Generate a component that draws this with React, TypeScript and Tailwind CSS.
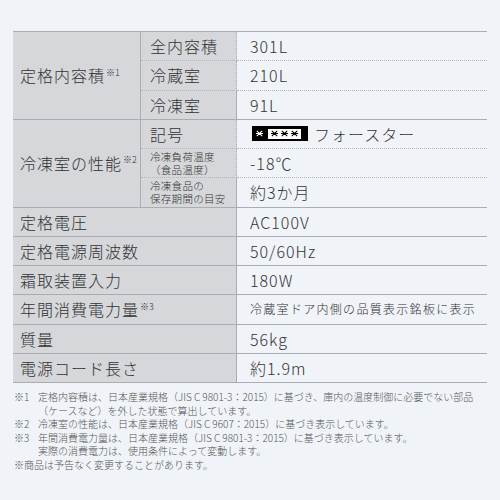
import type { ReactNode } from 'react';

const solid = 'border-[#a9acb0]';

function Star({ color }: { color: string }) {
  return (
    <svg width="9" height="9" viewBox="0 0 10 10" className="shrink-0">
      <path d="M1 5H9M2 2L8 8M8 2L2 8" stroke={color} strokeWidth="1.2" fill="none" />
    </svg>
  );
}

function FreezerMark() {
  return (
    <span className="mr-[6px] inline-flex h-[15px] items-center bg-black pl-[3px] pr-[7px]">
      <Star color="#fff" />
      <span className="ml-[4px] inline-flex h-[10px] items-center gap-[1px] bg-white px-[2px]">
        <Star color="#000" />
        <Star color="#000" />
        <Star color="#000" />
      </span>
    </span>
  );
}

function Note({ n }: { n: string }) {
  return <span className="relative -top-[3px] ml-[1px] text-[9px] tracking-normal">{n}</span>;
}

type Row = { label: ReactNode; value: ReactNode; small?: boolean };

const singles: Row[] = [
  { label: '定格電圧', value: 'AC100V' },
  { label: '定格電源周波数', value: '50/60Hz' },
  { label: '霜取装置入力', value: '180W' },
  { label: <>年間消費電力量<Note n="※3" /></>, value: '冷蔵室ドア内側の品質表示銘板に表示', small: true },
  { label: '質量', value: '56kg' },
  { label: '電源コード長さ', value: '約1.9m' },
];

export default function App() {
  const cell = 'flex items-center';
  const grey = 'bg-[#d5d7da]';
  return (
    <div className="min-h-[500px] w-[500px] bg-[#f0f4f8] pt-[31px] font-['Noto_Sans_CJK_JP','Noto_Sans',sans-serif] font-light text-[#333]">
      <div className="mx-[13px] grid h-[352px] grid-cols-[128px_96px_1fr] grid-rows-12 border-t border-[#a9acb0] text-[16px] tracking-[1px]">
        {/* 定格内容積 */}
        <div className={`${cell} ${grey} row-span-3 border-b border-r ${solid} pl-[7px]`}>
          定格内容積<Note n="※1" />
        </div>
        <div className={`${cell} ${grey} border-b border-r border-dotted border-b-[#b4b6b9] border-r-[#a9acb0] pl-[9px]`}>全内容積</div>
        <div className={`${cell} border-b border-dotted border-[#b4b6b9] pl-[13px]`}>301L</div>
        <div className={`${cell} ${grey} border-b border-r border-dotted border-b-[#b4b6b9] border-r-[#a9acb0] pl-[9px]`}>冷蔵室</div>
        <div className={`${cell} border-b border-dotted border-[#b4b6b9] pl-[13px]`}>210L</div>
        <div className={`${cell} ${grey} border-b border-r ${solid} pl-[9px]`}>冷凍室</div>
        <div className={`${cell} border-b ${solid} pl-[13px]`}>91L</div>

        {/* 冷凍室の性能 */}
        <div className={`${cell} ${grey} row-span-3 border-b border-r ${solid} pl-[7px]`}>
          冷凍室の性能<Note n="※2" />
        </div>
        <div className={`${cell} ${grey} border-b border-r border-dotted border-b-[#b4b6b9] border-r-[#a9acb0] pl-[9px]`}>記号</div>
        <div className={`${cell} border-b border-dotted border-[#b4b6b9] pl-[15px]`}>
          <FreezerMark />
          フォースター
        </div>
        <div className={`${cell} ${grey} border-b border-r border-dotted border-b-[#b4b6b9] border-r-[#a9acb0] pl-[9px] text-[10.5px] leading-[13px] tracking-[0.3px]`}>
          <span>
            冷凍負荷温度
            <br />
            （食品温度）
          </span>
        </div>
        <div className={`${cell} border-b border-dotted border-[#b4b6b9] pl-[13px]`}>-18℃</div>
        <div className={`${cell} ${grey} border-b border-r ${solid} pl-[9px] text-[10.5px] leading-[13px] tracking-[0.3px]`}>
          <span>
            冷凍食品の
            <br />
            保存期間の目安
          </span>
        </div>
        <div className={`${cell} border-b ${solid} pl-[13px]`}>約3か月</div>

        {singles.map((r, i) => (
          <div key={i} className="contents">
            <div className={`${cell} ${grey} col-span-2 border-b border-r ${solid} pl-[7px]`}>{r.label}</div>
            <div className={`${cell} border-b ${solid} pl-[13px] ${r.small ? 'text-[12px] tracking-[1.3px]' : ''}`}>{r.value}</div>
          </div>
        ))}
      </div>

      <div className="mx-[14px] mt-[7px] whitespace-nowrap text-[10px] leading-[13.5px] text-[#555]">
        <div className="flex">
          <span className="w-[24px] shrink-0">※1</span>
          <span>
            定格内容積は、日本産業規格（JIS C 9801-3：2015）に基づき、庫内の温度制御に必要でない部品
            <br />
            （ケースなど）を外した状態で算出しています。
          </span>
        </div>
        <div className="flex">
          <span className="w-[24px] shrink-0">※2</span>
          <span>冷凍室の性能は、日本産業規格（JIS C 9607：2015）に基づき表示しています。</span>
        </div>
        <div className="flex">
          <span className="w-[24px] shrink-0">※3</span>
          <span>
            年間消費電力量は、日本産業規格（JIS C 9801-3：2015）に基づき表示しています。
            <br />
            実際の消費電力は、使用条件によって変動します。
          </span>
        </div>
        <div>※商品は予告なく変更することがあります。</div>
      </div>
    </div>
  );
}
